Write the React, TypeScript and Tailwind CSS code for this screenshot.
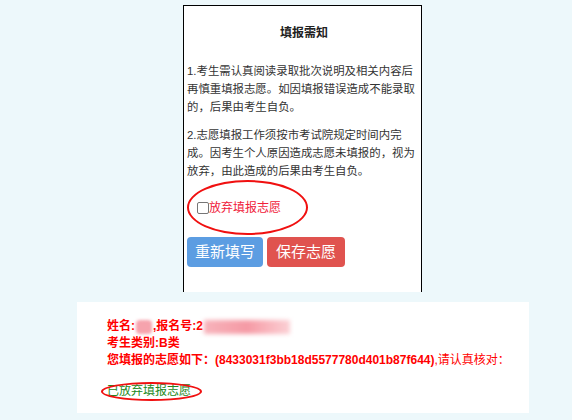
import React from "react";

const cjk = "font-['Liberation_Sans','Noto_Sans_CJK_SC',sans-serif]";

export default function App() {
  return (
    <div className={`min-h-[420px] w-full bg-[#edf8fb] pt-[5px] ${cjk}`}>
      <div className="ml-[183px] h-[287px] w-[239px] border-x border-t border-black bg-white pl-[3px] pt-[18px]">
        <h3 className="text-center text-[12px] font-bold leading-[18px] text-[#222]">
          填报需知
        </h3>
        <p className="mt-[20px] whitespace-nowrap text-[11.4px] leading-[18px] text-[#333]">
          1.考生需认真阅读录取批次说明及相关内容后
          <br />
          再慎重填报志愿。如因填报错误造成不能录取
          <br />
          的，后果由考生自负。
        </p>
        <p className="mt-[10px] whitespace-nowrap text-[11.4px] leading-[18px] text-[#333]">
          2.志愿填报工作须按市考试院规定时间内完
          <br />
          成。因考生个人原因造成志愿未填报的，视为
          <br />
          放弃，由此造成的后果由考生自负。
        </p>
        <div className="relative mt-[19px] flex h-[18px] items-center pl-[10px]">
          <span className="absolute left-0 top-[-19px] h-[55px] w-[121px] rounded-[50%] border-2 border-[#f01010]" />
          <span className="h-[12px] w-[12px] rounded-[2px] border border-[#767676] bg-white" />
          <span className="text-[12px] leading-[18px] text-[#f0203a]">放弃填报志愿</span>
        </div>
        <div className="mt-[20px] flex gap-[4px]">
          <button className="h-[30px] w-[76px] rounded-[4px] bg-[#5c9de2] text-[15px] text-white">
            重新填写
          </button>
          <button className="h-[30px] w-[78px] rounded-[4px] bg-[#e0534f] text-[15px] text-white">
            保存志愿
          </button>
        </div>
      </div>

      <div className="ml-[77px] mt-[10px] h-[111px] w-[452px] bg-white pl-[30px] pt-[16px] text-[12px] font-bold leading-[17px] text-[#ff0000]">
        <div className="flex items-center whitespace-nowrap">
          姓名:
          <span className="mx-[1px] inline-block h-[14px] w-[16px] rounded-[4px] bg-[#f6a3ad] blur-[1.5px]" />
          ,报名号:2
          <span className="ml-[1px] inline-block h-[14px] w-[86px] bg-gradient-to-r from-[#f7b3bb] via-[#f59aa5] to-[#fbd0d5] blur-[2px]" />
        </div>
        <div className="whitespace-nowrap">考生类别:B类</div>
        <div className="whitespace-nowrap">
          您填报的志愿如下：(8433031f3bb18d5577780d401b87f644)
          <span className="font-normal">,请认真核对：</span>
        </div>
        <div className="relative mt-[14px] whitespace-nowrap font-normal text-[#228822]">
          <span className="absolute left-[-6px] top-[-1px] h-[19px] w-[101px] rounded-[50%] border-2 border-[#f01010]" />
          已放弃填报志愿
        </div>
      </div>
    </div>
  );
}
